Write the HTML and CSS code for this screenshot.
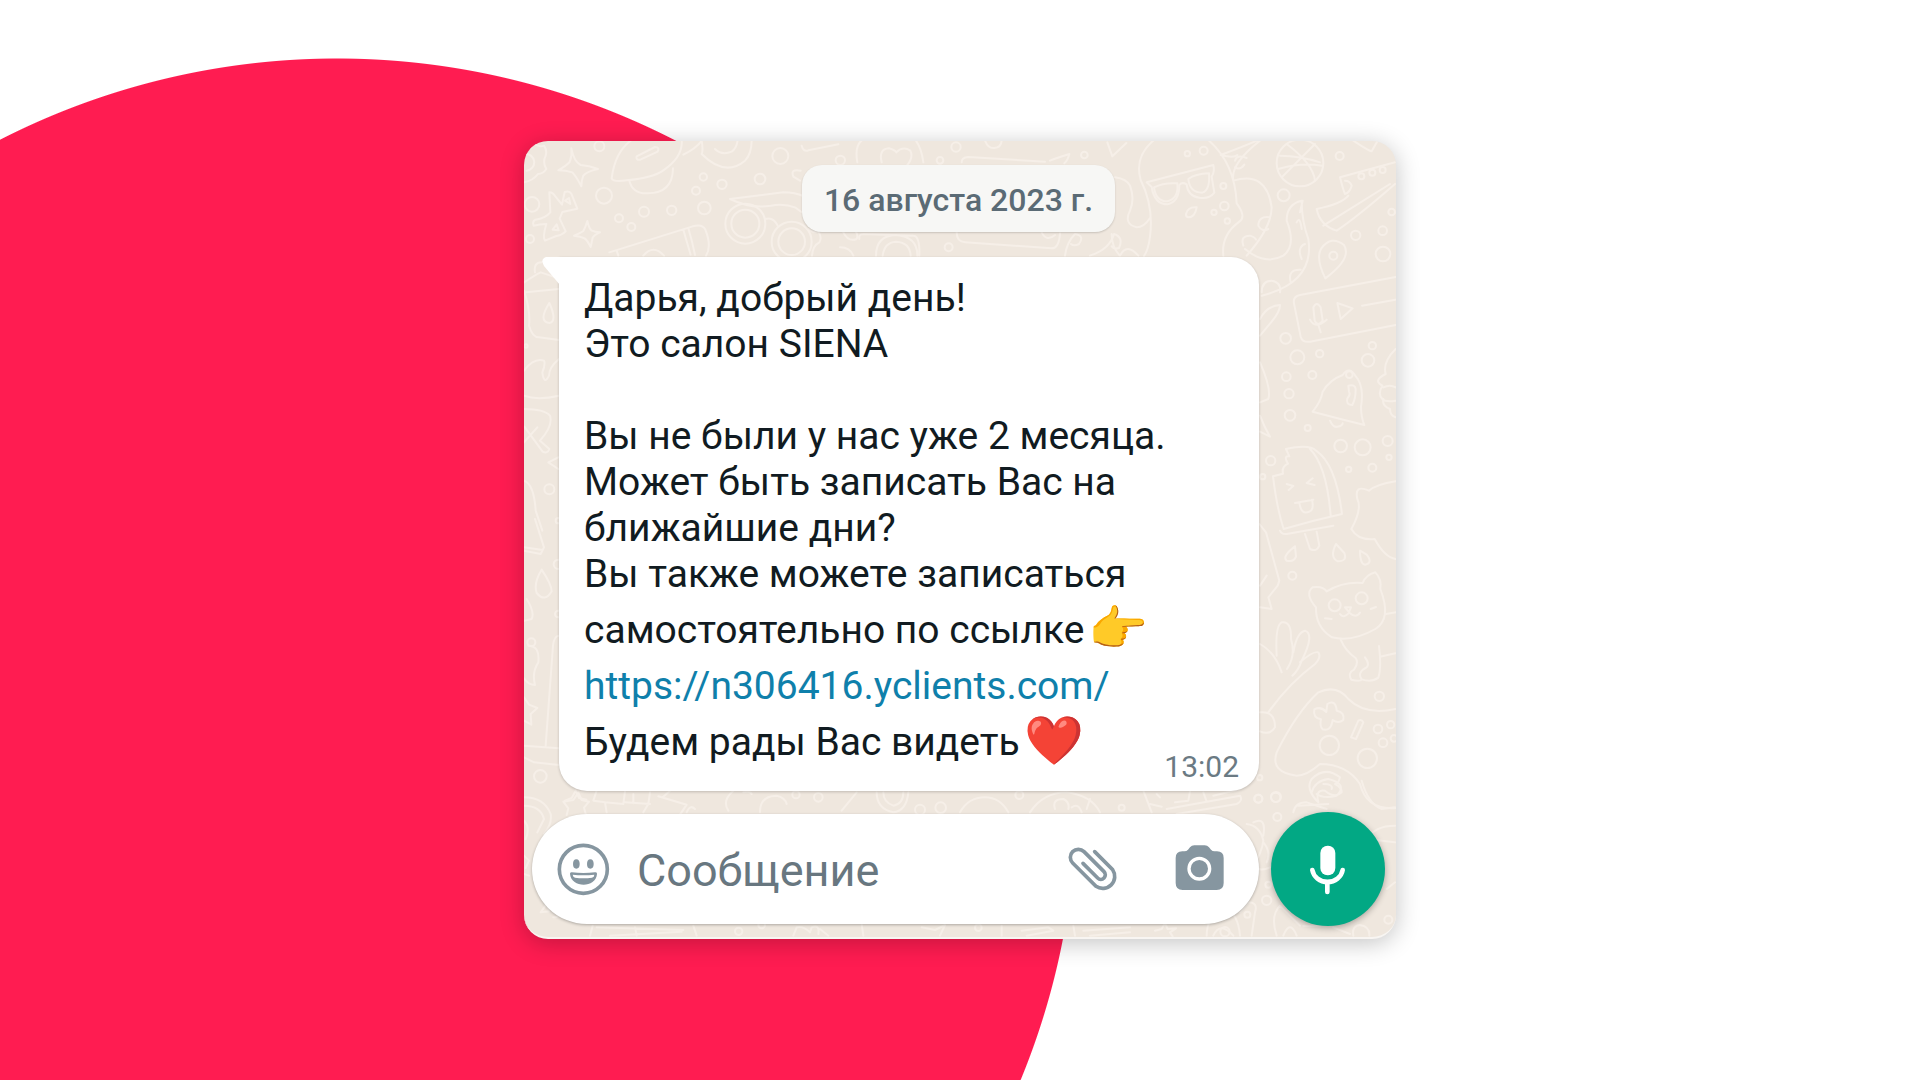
FILE: index.html
```html
<!DOCTYPE html>
<html lang="ru">

<head>
    <meta charset="utf-8">
    <meta name="viewport" content="width=device-width, initial-scale=1.0">
    <title>Сообщение от салона SIENA</title>
    <link rel="stylesheet" href="styles.css">
</head>

<body>
    <main class="chat">
        <!-- wallpaper doodles -->
        <svg class="wallpaper" viewBox="0 0 2616 2394" preserveAspectRatio="xMidYMid slice" aria-hidden="true">
            <!-- top left -->
            <g transform="translate(-42 -33)">
                <path d="M42 70q20-10 30-25q15 10 30 5q10 15 5 30q-10 20 2 40q-10 15-25 15q-15 20-42 25M45 75a22 22 0 0 1 5 50" />
                <path d="M184 58q8 40 28 50q25 2 52 12q-35 8-44 20q-6 15-6 32q-15-30-27-42q-20-6-42-6q25-15 34-25q8-20 5-41z" />
                <path d="M232 276q5 22 12 28q10 5 26 6q-18 8-22 16l-6 28q-10-20-18-26q-12-6-32-8q20-8 28-14q6-10 12-30z" />
                <path d="M118 190q10 0 18 12l20 25l8-38q15-4 20 5q8 20 18 45l-45 10l-8 20l18 38q-12 12-28 14l-34 14q-8-10 4-50q-20 0-38 5q-5-12 5-18q30-4 45-22z" />
                <path d="M165 215l12-8l4 18zM128 302l12-16l6 18z" />
                <path d="M305 148q10-80 60-115M305 148q5 12 45 6q80-8 110-30q60-40 55-92M380 82l55-28q15 0 8 14l-52 24q-14 2-11-10z" />
                <path d="M358 155q10 40 55 38q75 0 76-75M575 35q-15 22-55 42M575 35q5 30 0 40q70 70 130 20q20-20 20-62M615 60q20 20 50 8q15-10 18-35" />
                <path d="M660 210l160-20q70 0 105 48q5 22-8 28q-30-5-60-30q-35-14-75-6q-60 10-122-20z" />
                <circle cx="706" cy="284" r="60" /><circle cx="706" cy="284" r="42" />
                <circle cx="845" cy="338" r="60" /><circle cx="845" cy="338" r="40" />
                <path d="M765 270q25-8 38 20M895 300q20 15 28 5q15 20 5 35q-20 10-22 40" />
                <path d="M298 370l250-78q30-8 38 10q20 50 2 78M520 302q10 35 22 75M535 298q12 40 20 80M320 365l5 15M400 380q30-35 62 0" />
                <path d="M990 355q30 0 40 25M1000 310q15 30 40 20q5-10-2-22M1048 330q-2-15 12-15l150 5q20 0 18 60M1098 380q0-60 60-62q65 5 64 62M1118 380q5-40 40-42q42 2 44 42" />
                <path d="M1042 100q-10-55 20-70M1115 100q-10-40 22-42q18 5 22 12q20-20 42-5q10 20-10 45M1240 100q-5-40-22-65M875 50q5 20 20 14l90-18M870 155l-20-12q-10-25 22-18" />
                <circle cx="268" cy="52" r="15" /><circle cx="282" cy="200" r="24" /><circle cx="66" cy="226" r="22" /><circle cx="60" cy="330" r="12" />
                <circle cx="327" cy="268" r="12" /><circle cx="364" cy="294" r="12" /><circle cx="402" cy="248" r="15" /><circle cx="485" cy="244" r="14" />
                <circle cx="558" cy="185" r="12" /><circle cx="580" cy="144" r="11" /><circle cx="636" cy="166" r="14" /><circle cx="583" cy="237" r="19" />
                <circle cx="750" cy="150" r="16" /><circle cx="811" cy="81" r="24" /><circle cx="991" cy="94" r="14" /><circle cx="1290" cy="94" r="10" /><circle cx="1316" cy="355" r="12" />
            </g>
            <!-- top right -->
            <g transform="translate(1278 -33)">
                <circle cx="18" cy="54" r="14" /><circle cx="403" cy="78" r="10" /><circle cx="761" cy="65" r="12" /><circle cx="712" cy="74" r="8" />
                <path d="M35 100q0-15 20-16l230 14M300 95q18-8 58-20q-5 20-15 28M105 35q10 25 28 22q22-2 22-24M472 40l15 42l42-40M20 310q0 28 25 30l260 18q22 0 25-45M275 310q15 30 40 8" />
                <path d="M495 145q35 5 45 25q15 40 0 75q-20 40 20 50q22 0 40-28M612 33q-60 50-40 120q40 80 28 170q-5 40-18 58" />
                <path d="M345 380q5-40 30-65q30 5 12 30q-15 8-24 0M420 380q60-20 72-65q30 10 15 42q-15 5-22-5M485 315q0 40 25 65q20-40 55 0" />
                <path d="M590 160l200-52q5 20-5 35l8 48q-15 20-45 15q-35-5-38-40q-14-8-22 2q0 50-35 58q-40 0-48-52z" />
                <path d="M612 175q30-15 70-12q5 45-30 54q-35 0-40-42zM715 150q20-15 62-17q4 50-20 58q-38 0-42-41z" />
                <path d="M775 33q80 70 85 190q30 40 8 55q-55 40-48 102M812 78q80-30 120-48M812 78q40 10 50 0M930 35q-90 70-80 120q100-30 115 80q0 60-75 145" />
                <path d="M855 95q5-20 35-8M855 115q15 10 28-8M925 290q0-30 35-25M925 290q10 20 30 10M880 350q-10-30 20-30q15 5 18 12" />
                <path d="M885 360q60 50 115 20q40-30 10-105q0-50 45-60q0 60 20 115q20 130-140 170M1058 215q-5 20-8 35M1040 280q10-20 15 20M1065 345q-25 10-10 45M1022 460q-10-40 30-38M935 490q0-35 30-35q30 5 25 35" />
                <circle cx="1050" cy="102" r="70" />
                <path d="M1010 45q80 60 85 110M990 80q60 0 120 20M1095 45q-60 60-100 100M985 120q70-20 130-10" />
                <path d="M1170 145l165-45M1170 145q10 40 15 50q15-5 20-25q-5-15-20-15M1195 200q-20 25-95 40q10 50 60 65q60-40 175-140M1120 290l200-125M1210 35q45 30 55 32l18-32" />
                <circle cx="1234" cy="142" r="9" /><circle cx="1267" cy="131" r="9" /><circle cx="1298" cy="123" r="9" />
                <path d="M708 255q5-22 32-20q-5 30-25 30q-8-2-7-10z" />
                <circle cx="823" cy="231" r="13" /><circle cx="792" cy="250" r="8" /><circle cx="820" cy="171" r="9" /><circle cx="832" cy="276" r="8" />
                <circle cx="1001" cy="199" r="18" /><circle cx="1169" cy="81" r="12" /><circle cx="1217" cy="319" r="14" /><circle cx="1298" cy="305" r="13" /><circle cx="1325" cy="249" r="10" />
            </g>
            <!-- right side -->
            <g transform="translate(2178 327)">
                <circle cx="250" cy="20" r="12" /><circle cx="399" cy="15" r="22" />
                <path d="M226 88q-30-60-12-90q30-40 68-10q25 40-56 100z" />
                <path d="M437 84L150 138q-22 5-18 25l20 100q5 18 28 15l257-50M336 170l100-18M262 162l10 48l36-32zM190 175q10-20 22 0l6 40q-14 20-24 0zM180 212q15 30 50 0M206 230l6 20" />
                <path d="M30 210q20-40 60-42q0 20-25 50l-35 42M30 340q35 80 25 110l-25 10M30 500l15 35l15 28l-30-15" />
                <path d="M188 488q25-30 30-60q20-35 60-50q20-30 40 5q25 30 15 90q0 30 10 55q-80-20-155-40zM240 515q10 22 22 18q15-2 16-10M295 410q20-5 22 10q0 30-10 48q-20 0-15-20q10-10 5-20z" />
                <circle cx="298" cy="377" r="10" />
                <path d="M437 300q-40 40-30 75q-40 20-10 35q-15 25 0 40q10 10 40 5M400 415q20-10 37 0M400 450q-5 20 20 30q0 20 17 25" />
                <path d="M108 600q70-15 90 5q60 40 78 190q-90 20-175 45q-20-60-32-158l30-8q-5-20 15-30q-15-25 4-22zM180 600q50 50 62 200M110 705l20 6l-14 12M188 688l-18 14l24 6M135 762l55-10M148 760q5 40 30 28q15-5 8-36" />
                <path d="M437 697q-60 10-80 28q-45-20-35 25q15 30-18 90q20 35 70 30q30 55 63 60M90 845q5 12 20 10l140-25M165 855q10 30 15 45q20 10 28-10l-8-42" />
                <circle cx="107" cy="268" r="16" /><circle cx="142" cy="325" r="21" /><circle cx="209" cy="314" r="11" /><circle cx="367" cy="290" r="11" /><circle cx="354" cy="334" r="19" />
                <circle cx="109" cy="383" r="13" /><circle cx="187" cy="378" r="12" /><circle cx="117" cy="434" r="14" /><circle cx="120" cy="499" r="16" /><circle cx="173" cy="537" r="9" />
                <circle cx="272" cy="591" r="19" /><circle cx="338" cy="595" r="24" /><circle cx="413" cy="576" r="15" /><circle cx="296" cy="661" r="8" /><circle cx="367" cy="656" r="12" /><circle cx="417" cy="625" r="8" /><circle cx="62" cy="635" r="14" /><circle cx="38" cy="683" r="8" />
            </g>
            <g transform="translate(2178 1137)">
                <path d="M28 15l20 25l40 145l-5 15l-28 35l10 35l-35-5M30 200l20-30" />
                <path d="M135 82q-40 30-25 43q22 5 28-12zM258 75q-20 40 5 52q30 0 20-25zM330 95q0 40 15 42q25-5 5-30z" />
                <circle cx="127" cy="170" r="12" />
                <path d="M198 265q-35-40-10-60q30-5 42 12q50-30 108-25q10-25 38-32q20 20 15 50q35 90-15 120q-70 40-130 25q-50-30-48-90z" />
                <circle cx="254" cy="259" r="18" /><circle cx="335" cy="238" r="18" />
                <path d="M285 265l18 0l-6 14zM270 285q10 15 28-4q20 18 32 0M225 298l20 2M362 270l16-6" />
                <path d="M272 362q15 35 45 55q10 15-5 35q-20 10-8 30q20 5 28 2M345 415q15 20 5 30q-30 15-15 36q30 10 50-5q10-30 2-95M390 413l46-10M408 285l30-5" />
                <path d="M95 460q-20-60-65-85M80 410q-5-90 15-100q30-5 28 50q15 50-12 90M130 400q10-60 35-65q30 10-10 90q-10 30-28 45M150 430q40-35 55-30q10 15-10 35q-80 60-140 145M30 580q45-5 45 45q-15 25-45 12" />
                <path d="M80 700q60-120 125-180q55-25 90 20q50 50 141 30M80 700q-20 60 60 70q30 0 70-35q80 0 120 60q20 80 110 72" />
                <path d="M232 555q25-15 28 20q25 5 20 28q-15 12-32 0q-5 35-30 28q-10-10-5-30q-25-5-20-30q20-10 36 8zM303 655l22-50q10-5 15 5l-22 50z" />
                <circle cx="238" cy="679" r="29" /><circle cx="352" cy="718" r="29" /><circle cx="388" cy="532" r="14" /><circle cx="384" cy="630" r="13" /><circle cx="399" cy="671" r="13" /><circle cx="422" cy="617" r="11" /><circle cx="432" cy="658" r="10" />
                <path d="M205 850q-40-40-20-70q40-40 85-5q-5 20-15 20q20 10 20 25q-20 20-50-5q-30-5-20 35" />
                <circle cx="29" cy="776" r="8" /><circle cx="25" cy="839" r="12" /><circle cx="77" cy="835" r="14" />
            </g>
            <!-- left side -->
            <g transform="translate(-42 297)">
                <path d="M42 130q30-20 50-30l45 15M75 100q-5-30 20-30M48 160l98-10M42 155q20 60 15 105q10 35 30 35l60 8M118 192q-35 55 0 60q25-5 0-60zM42 395q30-40 60-30q5 10-5 35q5 40 20 10q0-25 30-50M42 470q40 15 105 0M42 510q60 0 78 20q10 30-30 75l28 25q-5 15-20 8l-55-75M42 610l40-45M145 655l-30 15l30 20M42 725q30 10 35 90q10 30 20 60" />
                <circle cx="118" cy="751" r="15" /><circle cx="145" cy="845" r="8" /><circle cx="48" cy="321" r="5" />
            </g>
            <g transform="translate(-42 1137)">
                <path d="M42 95l50 10l10-20L75 0M42 85l56 8M95 152q-25 40-15 70q25 30 45-5q0-20-30-65zM50 240q25 40 15 60l-23 5M55 380q35 0 30 50q-20 30-10 68q-20 0-33-20M42 535l15 22l25 10l-20 18l2 32l-22-12M147 350q-15 0-18 30l-22 300M42 680l105 8M42 715l30 15l75 8M165 845l20-8l12-22l10 22l22 5" />
                <circle cx="64" cy="370" r="12" /><circle cx="91" cy="772" r="19" /><circle cx="145" cy="136" r="14" /><circle cx="145" cy="285" r="10" />
            </g>
            <!-- bottom -->
            <g transform="translate(-42 1917)">
                <path d="M42 55q60 0 80 50q5 30-20 60M42 80q50 0 60 40l-20 40M42 125q20 20 5 55" />
                <path d="M160 68l30-5l15-22l10 22l22 5l-15 18l5 18M160 68l15 20l-5 20M260 35l-10 30l35 5l5 30M285 70l55 5l5-38M345 70l75 5M420 40l-5 35l-15 25M370 45v28M445 52l85 25l-30 45M480 35l-20 18M530 100q10-25 25-10" />
                <path d="M670 35q-35 30-15 60M700 40q20-5 25 5M750 100q0-50 50-50q25 5 30 25M1040 40l-45 55M1100 40q0 50 50 60q40-5 45-60M1120 40q0 30 30 40q30-5 30-40M42 230l15 15l-10 22M42 285l15 5M92 400l20-28l5 25zM130 415q20 0 20-20" />
                <circle cx="858" cy="47" r="11" /><circle cx="925" cy="55" r="13" /><circle cx="1230" cy="92" r="15" /><circle cx="1292" cy="86" r="16" />
                <path d="M240 470l8-30M260 445l260 8M300 470l215-12M380 470l-5-25M560 470l-10-30M850 470l10-25q20-5 40 15l5-15q25-10 20 20M930 450l25 20M1055 435l5 35M1235 445l40 8l30-15l-15 32" />
                <circle cx="686" cy="457" r="11" /><circle cx="755" cy="438" r="10" />
            </g>
            <g transform="translate(1278 1917)">
                <path d="M30 100q25-45 75-45q45 0 70 45M240 100q40-60 110-60q75 10 100 60M315 90q-10-30 25-30q20 10 15 30M365 85q20-15 30 15M420 60l-10 30M580 35l25 65M600 75l35 8M620 45l10 10M650 90l220-40q10 15-10 25l-180 30M675 70l40-5l5-28M760 40l10 28M790 50l80-20" />
                <path d="M1085 40q10-35 50-40q60 15 25 50q-40 10-60-5M1120 15q30 0 25 15M1235 5q20 70 60 85l40-5M1030 100q5-30 40-30l60 20M1045 80l90-5M910 130q40-20 30 40M890 135q40 5 50 50q-5 40-30 70M940 190q25 30 10 60M900 260q30 20 60 5M1335 140q-60 0-85 40l85 10" />
                <circle cx="208" cy="48" r="12" /><circle cx="515" cy="86" r="9" /><circle cx="925" cy="59" r="12" /><circle cx="978" cy="54" r="15" /><circle cx="982" cy="114" r="12" /><circle cx="955" cy="317" r="9" /><circle cx="950" cy="364" r="14" />
                <path d="M155 470v-30M215 455l80-10l15 10l-80 15M375 470l-5-30M400 455l140-10M420 470l120-10M615 455l20-5l10-18l8 18l25-2l-18 12l8 12M770 470q0-60 55-85q40 20 45 85M790 470q20-45 60 0M870 400l25-30q30 0 20 30l-10 70M980 470q-20-60 10-90q30 30 60 60M1000 470q20-50 40 0M1060 440q60 5 100-10M1150 445l50 20M1210 470q-5-30 20-32q30 5 28 32M1310 330l25-20" />
                <circle cx="85" cy="446" r="10" /><circle cx="825" cy="458" r="14" /><circle cx="892" cy="407" r="9" /><circle cx="1315" cy="422" r="12" />
            </g>
        </svg>

        <time class="date" datetime="2023-08-16">16 августа 2023 г.</time>

        <article class="message">
            <svg class="tail" viewBox="0 0 18 28" aria-hidden="true">
                <path d="M18 0H4Q-2 2 2 9L18 28z" />
            </svg>
            <p>
                Дарья, добрый день!<br>
                Это салон SIENA<br>
                <br>
                Вы не были у нас уже 2 месяца.<br>
                Может быть записать Вас на<br>
                ближайшие дни?<br>
                Вы также можете записаться
            </p>
            <p class="tall">
                самостоятельно по ссылке<span class="emoji">👉</span><br>
                <a href="https://n306416.yclients.com/">https://n306416.yclients.com/</a>
            </p>
            <div class="last-row">
                <p class="tall">Будем рады Вас видеть<span class="emoji">❤️</span></p>
                <time class="sent" datetime="13:02">13:02</time>
            </div>
        </article>

        <form class="composer">
            <div class="field">
                <button type="button" class="icon" aria-label="Эмодзи">
                    <svg viewBox="140 185 165 165">
                        <circle class="ring" cx="222" cy="267" r="72" />
                        <ellipse cx="201" cy="251" rx="10" ry="14" />
                        <ellipse cx="243" cy="251" rx="10" ry="14" />
                        <path d="M182 281Q181 275 188 276Q222 280 257 276Q264 275 263 281C260 324 186 324 182 281z" />
                        <path class="teeth" d="M190 283Q222 287 255 283Q255 290 248 292Q222 296 197 292Q191 290 190 283z" />
                    </svg>
                </button>
                <input type="text" id="message" placeholder="Сообщение" aria-label="Сообщение">
                <button type="button" class="icon" aria-label="Прикрепить файл">
                    <svg viewBox="345 185 165 165">
                        <path class="clip" d="M434 214L488 268A36 36 0 0 1 438 318L368 248A24 24 0 0 1 402 214L462 274A13 13 0 0 1 443 293L399 249" />
                    </svg>
                </button>
                <button type="button" class="icon camera" aria-label="Камера">
                    <svg viewBox="667 185 165 165">
                        <path d="M698 213H704Q711 213 715 208L721 201Q726 195 734 195H765Q773 195 778 201L784 208Q788 213 795 213H802Q822 213 822 233V308Q822 329 801 329H699Q678 329 678 308V233Q678 213 698 213z" />
                        <circle class="lens" cx="749" cy="265" r="31" />
                    </svg>
                </button>
            </div>
            <button type="button" class="mic" aria-label="Голосовое сообщение">
                <svg viewBox="963 96 342 342">
                    <rect x="1111" y="197" width="45" height="89" rx="22" />
                    <path d="M1087 270A46 42 0 0 0 1178 270M1132 312V336" />
                </svg>
            </button>
        </form>
    </main>
</body>

</html>
```
FILE: styles.css
```css
* {
    box-sizing: border-box;
}

/* big red circle behind the chat */
body {
    display: grid;
    place-items: center;
    min-height: 100vh;
    margin: 0;
    background: #fff radial-gradient(circle at 337px 798px, #ff1c51 739px, #fff 740px) no-repeat;
    font-family: Roboto, "Noto Sans", sans-serif;
    color: #111b21;
}

.chat {
    position: relative;
    display: flex;
    flex-direction: column;
    width: 100%;
    max-width: 872px;
    padding: 24px 11px 11px 8px;
    border-bottom: 2px solid #f8f5f2;
    border-radius: 24px;
    overflow: hidden;
    background: #efe7de;
    box-shadow: 0 4px 24px rgba(0, 0, 0, 0.24);
}

.wallpaper {
    position: absolute;
    top: 0;
    left: 0;
    width: 100%;
    height: 100%;
    fill: none;
    stroke: #f6efe8;
    stroke-width: 6;
    stroke-linecap: round;
    stroke-linejoin: round;
}

.date {
    position: relative;
    align-self: center;
    padding: 3px 22px 0;
    border-radius: 20px;
    background: #f7f7f5;
    box-shadow: 0 1px 2px rgba(0, 0, 0, 0.16);
    font-size: 32px;
    font-weight: 500;
    line-height: 64px;
    color: #5b6b75;
}

.message {
    position: relative;
    margin: 25px 126px 21px 27px;
    padding: 18px 20px 7px 25px;
    border-radius: 0 28px 28px 28px;
    background: #fff;
    box-shadow: 0 1px 3px rgba(0, 0, 0, 0.2);
    font-size: 39px;
    line-height: 46px;
}

.tail {
    position: absolute;
    top: 0;
    left: -17px;
    width: 18px;
    height: 28px;
    fill: #fff;
}

.message p {
    margin: 0;
}

.message .tall {
    line-height: 56px;
}

.message p + .tall {
    margin-top: 5px;
}

.message a {
    color: #0f80ab;
    text-decoration: none;
}

.emoji {
    margin-left: 4px;
    font-size: 48px;
    line-height: 1;
    vertical-align: -2px;
}

.last-row {
    display: flex;
    justify-content: space-between;
    align-items: flex-end;
}

.last-row .tall {
    padding-bottom: 14px;
}

.sent {
    font-size: 30px;
    line-height: 34px;
    color: #6b7a83;
}

.composer {
    position: relative;
    display: flex;
    align-items: center;
    gap: 12px;
}

.field {
    display: flex;
    flex: 1;
    align-items: center;
    min-width: 0;
    height: 110px;
    padding: 0 32px 0 24px;
    border-radius: 55px;
    background: #fff;
    box-shadow: 0 1px 3px rgba(0, 0, 0, 0.28);
}

.field input {
    flex: 1;
    min-width: 0;
    margin: 0 24px 0 26px;
    padding: 4px 0 0;
    border: 0;
    outline: 0;
    background: none;
    font: 45px/56px Roboto, "Noto Sans", sans-serif;
    color: #111b21;
}

.field input::placeholder {
    color: #687780;
    opacity: 1;
}

button {
    flex: none;
    padding: 0;
    border: 0;
    background: none;
    cursor: pointer;
}

button svg {
    display: block;
    width: 100%;
}

.icon {
    width: 55px;
    height: 55px;
    fill: #8696a0;
}

.camera {
    margin-left: 52px;
}

.ring,
.clip {
    fill: none;
    stroke: #8696a0;
    stroke-width: 11;
    stroke-linecap: round;
}

.teeth {
    fill: #fff;
}

.lens {
    fill: none;
    stroke: #fff;
    stroke-width: 10;
}

.mic {
    width: 114px;
    height: 114px;
    border-radius: 50%;
    background: #02a884;
    box-shadow: 0 2px 6px rgba(0, 0, 0, 0.3);
    fill: #fff;
}

.mic path {
    fill: none;
    stroke: #fff;
    stroke-width: 14;
    stroke-linecap: round;
}
```
